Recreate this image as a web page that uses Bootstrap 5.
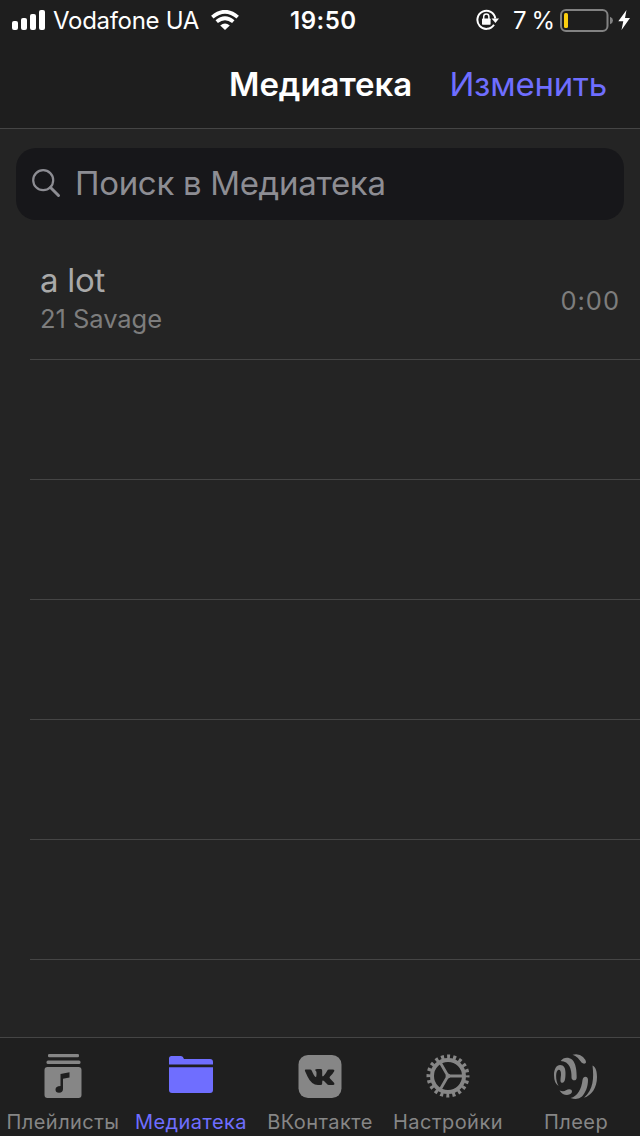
<!DOCTYPE html>
<html lang="ru" data-bs-theme="dark">
<head>
<meta charset="utf-8">
<meta name="viewport" content="width=device-width, initial-scale=1">
<title>Медиатека</title>
<link href="https://cdn.jsdelivr.net/npm/bootstrap@5.3.0/dist/css/bootstrap.min.css" rel="stylesheet">
<style>
body{font-family:Inter,"Liberation Sans",sans-serif;background:#242424;color:#fff;height:1136px;overflow:hidden}
svg{display:block;flex:none}
.app{width:640px;height:1136px}
.bar-top{height:129px;background:#1e1e1e;border-bottom:1px solid #454545}
.status{height:40px;font-size:24px;line-height:40px;white-space:nowrap}
.status span{padding-top:2px}
.carrier{width:146px;margin-left:8px;letter-spacing:-.3px}
.clock{width:66px;margin-left:51px;font-weight:600;letter-spacing:.5px}
.pct{width:41px;margin-left:14px;letter-spacing:-.9px}
.titles{height:88px;font-size:33px;line-height:88px;padding:0 33px 0 229px;white-space:nowrap}
.heading{font-size:33px;font-weight:600;line-height:89px;letter-spacing:-.05px}
.accent{color:#6f6eff}
.edit{letter-spacing:-.2px;line-height:89px}
.search{height:72px;margin:19px 16px 20px;border-radius:20px;background:#17171a;color:#8d8d93;padding:0 16px 2px;font-size:33px;line-height:70px}
.search-text{margin-left:14px;padding-bottom:1px;letter-spacing:-.32px;white-space:nowrap}
.track{height:120px;margin-left:30px;border-bottom:1px solid #454545}
.song{font-size:33px;line-height:40px;color:#a9a9a9;letter-spacing:-.3px}
.artist{font-size:25.5px;line-height:38px;color:#7d7d7d;letter-spacing:-.05px}
.time{letter-spacing:1px;padding-top:2px}
.tabs{height:99px;background:#1f1f1f;border-top:1px solid #454545;color:#868686}
.tab{width:128px;font-size:20px;line-height:24px;letter-spacing:.45px;white-space:nowrap;padding:16px 2px 0 0;color:inherit;text-decoration:none}
.tab svg{margin-bottom:12px}
.tab.shift{padding-right:0}
.tab.active{color:#6f6eff}
</style>
</head>
<body>
<div class="app d-flex flex-column">
  <header class="bar-top">
    <div class="status d-flex align-items-center">
      <svg width="34" height="20" viewBox="0 0 34 20" fill="#fff" style="margin-left:11px"><rect x="1" y="11" width="6" height="9" rx="2"/><rect x="10" y="8" width="6" height="12" rx="2"/><rect x="19" y="4" width="6" height="16" rx="2"/><rect x="28" y="0" width="6" height="20" rx="2"/></svg>
      <span class="carrier">Vodafone UA</span>
      <svg width="28" height="20" viewBox="0 0 28 20" style="margin-left:12px"><g fill="none" stroke="#fff" stroke-width="3.7"><path d="M1.3 7.1Q14-3.6 26.7 7.1"/><path d="M5.7 11.7Q14 4.8 22.3 11.7"/></g><path d="M9.2 15.5Q14 11.5 18.8 15.5L14 20Z" fill="#fff"/></svg>
      <span class="clock">19:50</span>
      <svg width="23" height="22" viewBox="0 0 23 22" fill="none" stroke="#fff" stroke-width="2" style="margin-left:120px"><path d="M18 15.7A9 9 0 1 1 19.3 9.5"/><path d="M15.5 9.5H23L19.5 14Z" fill="#fff" stroke="none"/><rect x="6" y="9.5" width="8.6" height="6.3" rx=".7" fill="#fff" stroke="none"/><path d="M7.7 10V7.7a2.6 2.6 0 0 1 5.2 0V10" stroke-width="1.5"/></svg>
      <span class="pct">7 %</span>
      <svg width="54" height="24" viewBox="0 0 54 24" style="margin-left:6px"><rect x="1" y="2" width="46.5" height="21" rx="5" fill="none" stroke="#828282" stroke-width="2"/><rect x="4" y="5" width="4" height="15" rx="1.5" fill="#fccf0f"/><path d="M50 8.8Q53 10 53 12.5T50 16.2Z" fill="#828282"/></svg>
      <svg width="13" height="20" viewBox="0 0 13 20" fill="#fff" style="margin-left:4px"><path d="M8.5 0L.3 11.2H5.3L3.5 20L12 8H7Z"/></svg>
    </div>
    <div class="titles d-flex justify-content-between">
      <h1 class="heading m-0">Медиатека</h1>
      <span class="accent edit">Изменить</span>
    </div>
  </header>
  <main class="flex-grow-1 overflow-hidden">
    <div class="search d-flex align-items-center">
      <svg width="29" height="30" viewBox="0 0 29 30" fill="none" stroke="#8d8d93" stroke-width="2.2"><circle cx="11.2" cy="12.2" r="10"/><path d="M18.5 19.5L26.5 27.5" stroke-width="3" stroke-linecap="round"/></svg>
      <span class="search-text">Поиск в Медиатека</span>
    </div>
    <ul class="list-unstyled m-0">
      <li class="track d-flex justify-content-between align-items-center">
        <div style="padding:0 0 1px 10px"><div class="song">a lot</div><div class="artist">21 Savage</div></div>
        <span class="artist time" style="padding-right:20px">0:00</span>
      </li>
      <li class="track"></li><li class="track"></li><li class="track"></li><li class="track"></li><li class="track"></li>
    </ul>
  </main>
  <nav class="tabs d-flex">
    <a class="tab d-flex flex-column align-items-center"><svg width="44" height="44" viewBox="0 0 44 44" fill="currentColor"><rect x="7" y="0" width="31" height="3.3" rx="1.3"/><rect x="5.5" y="6.5" width="34" height="3.5" rx="1.5"/><path fill-rule="evenodd" d="M6.5 13H37.5Q40.5 13 40.5 16V41Q40.5 44 37.5 44H6.5Q3.5 44 3.5 41V16Q3.5 13 6.5 13ZM19.5 20L28.5 18.3V23.5L22 24.7V35Q22 38.7 18 38.7Q14.5 38.7 14.5 35.5T19.5 32Z"/></svg><span>Плейлисты</span></a>
    <a class="tab active d-flex flex-column align-items-center"><svg width="44" height="44" viewBox="0 0 44 44" fill="currentColor"><path d="M0 10.5V4.5Q0 2 2.5 2H12Q14 2 15 5H41Q44 5 44 8V10.5Z"/><path d="M0 13.3H44V36Q44 39 41 39H3Q0 39 0 36Z"/></svg><span>Медиатека</span></a>
    <a class="tab shift d-flex flex-column align-items-center"><svg width="44" height="44" viewBox="0 0 44 44"><rect x=".5" y="1" width="43" height="43" rx="9.5" fill="currentColor"/><path fill="#1f1f1f" d="M7.5 15.5H12Q13.3 15.5 13.8 16.8Q16 22 17.5 23Q18.5 23.4 18.5 20.5V18.5Q18.5 17 17 16Q17.5 15 19.5 15H23Q24.2 15 24.2 16.7V21.5Q24.2 23.2 26 21.5Q28 19.5 29.3 16.6Q29.8 15.5 31 15.5H35Q37 15.5 36.2 17.2Q35 19.5 32 22.5Q31 23.5 32 24.5L36 28.8Q37.3 30.8 35 31H31Q29.7 31 28.5 29.5L26 27Q24.2 25.7 24.2 28V29.5Q24.2 31 22.5 31H20Q13.5 31 9.5 22.5L7 17Q6.5 15.5 7.5 15.5Z"/></svg><span>ВКонтакте</span></a>
    <a class="tab shift d-flex flex-column align-items-center"><svg width="44" height="44" viewBox="0 0 44 44" fill="none" stroke="currentColor"><circle cx="22" cy="22" r="19.4" stroke-width="4.2" stroke-dasharray="3 3.0947" stroke-dashoffset="1.5"/><circle cx="22" cy="22" r="16" stroke-width="4"/><path d="M22 22H37M22 22L14.5 9M22 22L14.5 35" stroke-width="2.8"/><circle cx="22" cy="22" r="2" fill="currentColor"/></svg><span>Настройки</span></a>
    <a class="tab shift d-flex flex-column align-items-center"><svg width="44" height="46" viewBox="0 0 44 46" fill="currentColor" style="margin-bottom:10px"><path d="M4.5 32Q0 29 0 21C0 15 2.5 11 6 11C10 11 11.5 14 11.5 19C11.5 24 11 28.5 8.5 28.8C6 29 6.3 26.5 7 21C7.2 17 6 15.5 4.5 15.8C1.5 16.5 1.2 26 4.5 32Z"/><path d="M6.7 7C9 3.5 14 2.5 18 5.5C22 9 22.7 17 22.7 23.5C22.7 27.5 17.5 27 17.5 23.5C17.7 15 15.5 7.5 6.7 7Z"/><path d="M18.5 .8Q25-.8 29 3Q32 6 32 8C32 10 29.2 10.2 27.5 8.5C25 5.5 23.5 2.5 18.5 .8Z"/><path d="M5.5 36.5Q9.5 38 12 36.3C14.5 34.6 18 35 18 37.3Q18 40.5 13 41Q8.5 41 5.5 36.5Z"/><path d="M16.5 44C23.5 42.5 27.5 35 28.5 26C29.3 21.5 34 22 34 26C34 33 31.5 38.5 28 42.5Q24 46.5 16.5 44Z"/><path d="M38.5 11.5C42 13 43 18 43 23C43 34 37.5 41.5 30 43.7C39.5 35.5 40 24 38.5 11.5Z"/></svg><span>Плеер</span></a>
  </nav>
</div>
<script src="https://cdn.jsdelivr.net/npm/bootstrap@5.3.0/dist/js/bootstrap.bundle.min.js"></script>
</body>
</html>
